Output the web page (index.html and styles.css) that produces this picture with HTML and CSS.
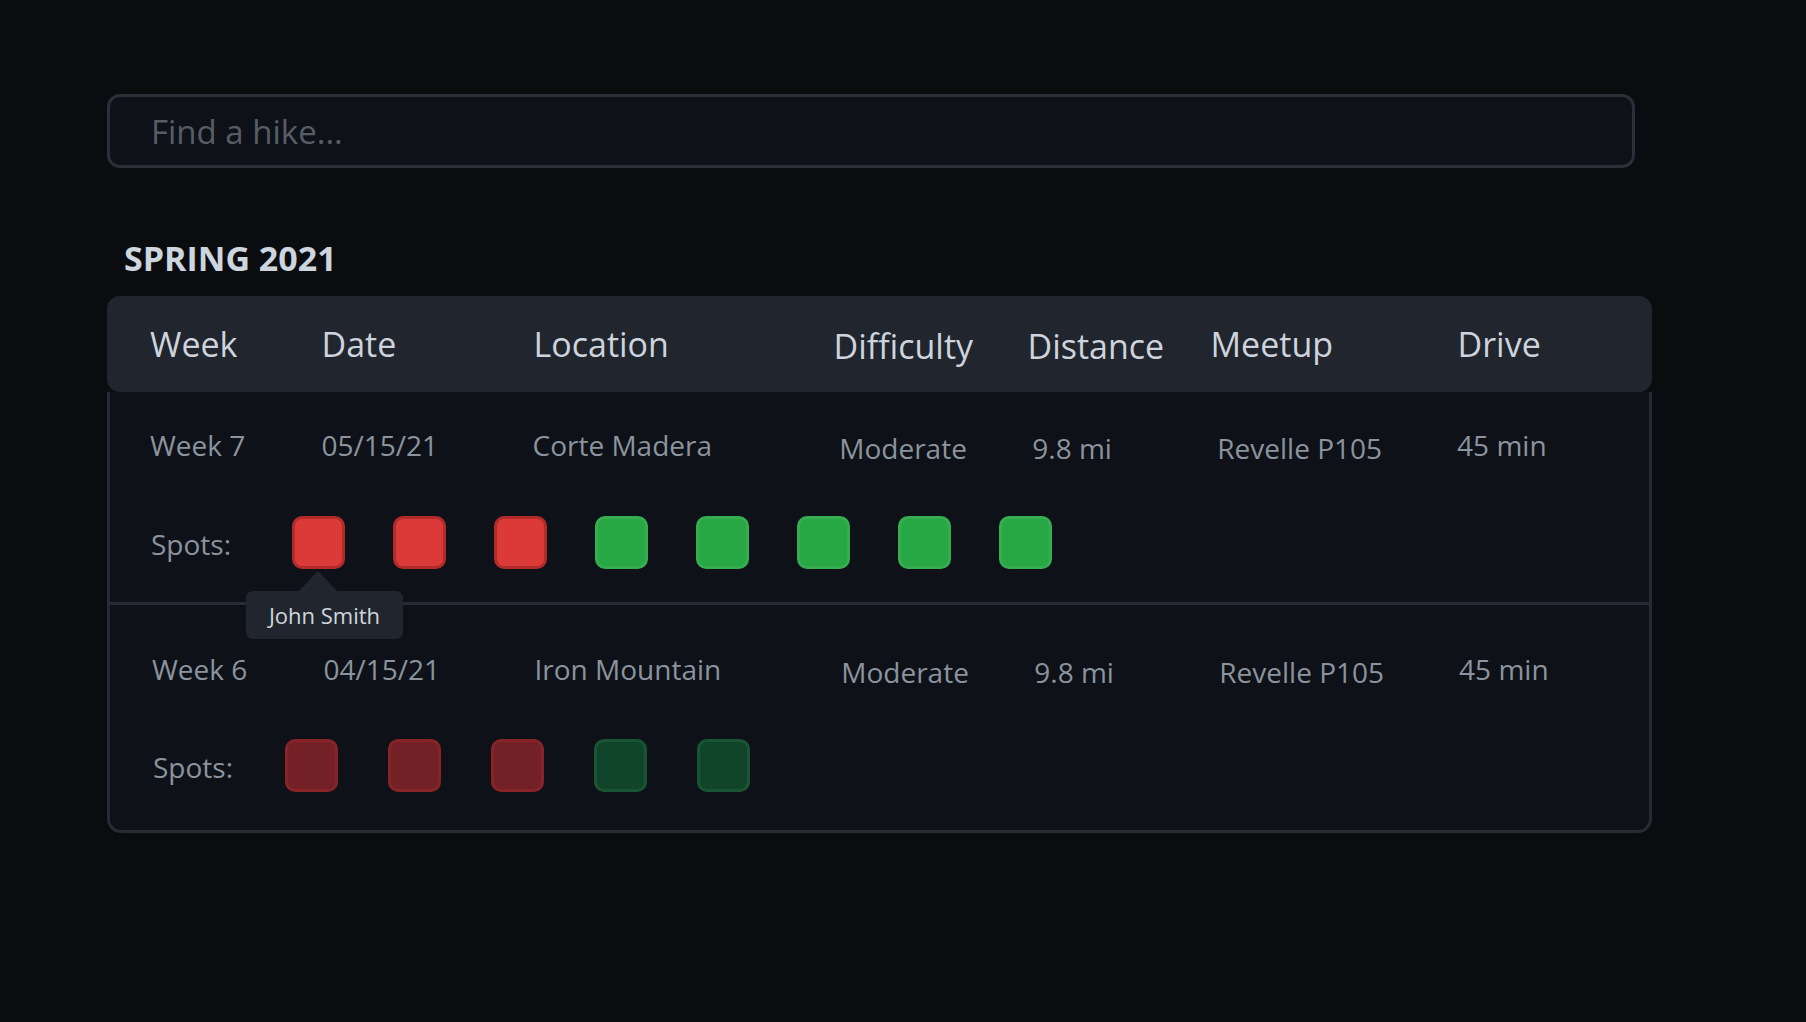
FILE: index.html
```html
<!DOCTYPE html>
<html lang="en">
<head>
<meta charset="utf-8">
<title>Hikes</title>
<link rel="stylesheet" href="styles.css">
</head>
<body>
<main class="page">
  <input class="search" type="text" placeholder="Find a hike...">

  <section class="season">
    <h2 class="season-title">SPRING 2021</h2>
    <div class="card">
      <div class="card-head">
        <div class="hcell">Week</div>
        <div class="hcell">Date</div>
        <div class="hcell">Location</div>
        <div class="hcell hcell--low">Difficulty</div>
        <div class="hcell hcell--low">Distance</div>
        <div class="hcell">Meetup</div>
        <div class="hcell">Drive</div>
      </div>
      <div class="card-body">
        <div class="week">
          <div class="week-info">
            <div class="cell">Week 7</div>
            <div class="cell">05/15/21</div>
            <div class="cell">Corte Madera</div>
            <div class="cell cell--low">Moderate</div>
            <div class="cell cell--low">9.8 mi</div>
            <div class="cell cell--low">Revelle P105</div>
            <div class="cell">45 min</div>
          </div>
          <div class="spots">
            <span class="spots-label">Spots:</span>
            <div class="spot-list">
              <span class="spot spot--taken">
                <span class="tooltip">John Smith</span>
              </span>
              <span class="spot spot--taken"></span>
              <span class="spot spot--taken"></span>
              <span class="spot spot--open"></span>
              <span class="spot spot--open"></span>
              <span class="spot spot--open"></span>
              <span class="spot spot--open"></span>
              <span class="spot spot--open"></span>
            </div>
          </div>
        </div>

        <div class="week week--past">
          <div class="week-info">
            <div class="cell">Week 6</div>
            <div class="cell">04/15/21</div>
            <div class="cell">Iron Mountain</div>
            <div class="cell cell--low">Moderate</div>
            <div class="cell cell--low">9.8 mi</div>
            <div class="cell cell--low">Revelle P105</div>
            <div class="cell">45 min</div>
          </div>
          <div class="spots">
            <span class="spots-label">Spots:</span>
            <div class="spot-list">
              <span class="spot spot--taken"></span>
              <span class="spot spot--taken"></span>
              <span class="spot spot--taken"></span>
              <span class="spot spot--open"></span>
              <span class="spot spot--open"></span>
            </div>
          </div>
        </div>
      </div>
    </div>
  </section>
</main>
</body>
</html>
```
FILE: styles.css
```css
* { box-sizing: border-box; }

html, body {
  margin: 0;
  background: #0a0c10;
}

body {
  font-family: "Open Sans", "Noto Sans", sans-serif;
  color: #c9d1d9;
  min-height: 1022px;
}

.page {
  padding: 94px 0 0 107px;
}

.search {
  display: block;
  width: 1528px;
  height: 74px;
  margin: 0;
  padding: 0 0 0 41px;
  background: #0e1117;
  border: 3px solid #2b2f37;
  border-radius: 13px;
  font-family: "Open Sans", sans-serif;
  font-size: 33px;
  color: #c9d1d9;
  outline: none;
}

.search::placeholder {
  color: #565d66;
}

.season-title {
  margin: 67px 0 0 17px;
  font-size: 34px;
  line-height: 46px;
  font-weight: 700;
  color: #cdd5de;
  letter-spacing: 0;
}

.card {
  width: 1545px;
  margin-top: 15px;
}

.card-head {
  display: grid;
  grid-template-columns: 171.5px 212px 300px 194px 183px 247px 1fr;
  align-items: start;
  height: 96px;
  padding: 25px 0 0 43px;
  background: #21252d;
  border-radius: 13px;
}

.hcell {
  font-size: 34px;
  line-height: 46px;
  color: #cdd4dd;
  white-space: nowrap;
}

.hcell--low {
  margin-top: 2px;
}

.card-body {
  background: #0e1117;
  border: 3px solid #272b33;
  border-top: none;
  border-radius: 0 0 14px 14px;
}

.week {
  padding: 34px 0 33px 40px;
}

.week--past {
  border-top: 3px solid #272b33;
  padding: 45px 0 38px 42px;
}

.week-info {
  display: grid;
  grid-template-columns: 171.5px 211px 306.8px 193px 185px 239.8px 1fr;
  align-items: start;
  height: 38px;
}

.cell {
  font-size: 28px;
  line-height: 38px;
  color: #8b949e;
  white-space: nowrap;
}

.cell--low {
  margin-top: 3px;
}

.spots {
  display: flex;
  align-items: center;
  height: 53px;
  margin-top: 52px;
}

.week--past .spots {
  margin-top: 51px;
}

.spots-label {
  margin-left: 1px;
  padding-top: 2px;
  font-size: 28px;
  line-height: 38px;
  color: #8b949e;
}

.spot-list {
  display: flex;
  gap: 48px;
  margin-left: 61px;
}

.week--past .spot-list {
  gap: 50px;
  margin-left: 52px;
}

.spot {
  position: relative;
  width: 53px;
  height: 53px;
  border-radius: 10px;
  border: 3px solid;
}

.spot--taken {
  background: #dc3a38;
  border-color: #b22b2b;
}

.spot--open {
  background: #28a745;
  border-color: #37ad52;
}

.week--past .spot--taken {
  background: #732126;
  border-color: #862427;
}

.week--past .spot--open {
  background: #10452a;
  border-color: #1a5533;
}

.tooltip {
  position: absolute;
  z-index: 2;
  left: -49px;
  top: calc(100% + 25px);
  width: 157px;
  height: 48px;
  background: #21262e;
  border-radius: 7px;
  font-size: 22px;
  line-height: 48px;
  text-align: center;
  color: #d0d6de;
  white-space: nowrap;
}

.tooltip::before {
  content: "";
  position: absolute;
  left: 53px;
  top: -20px;
  border-left: 19px solid transparent;
  border-right: 19px solid transparent;
  border-bottom: 20px solid #21262e;
}
```
